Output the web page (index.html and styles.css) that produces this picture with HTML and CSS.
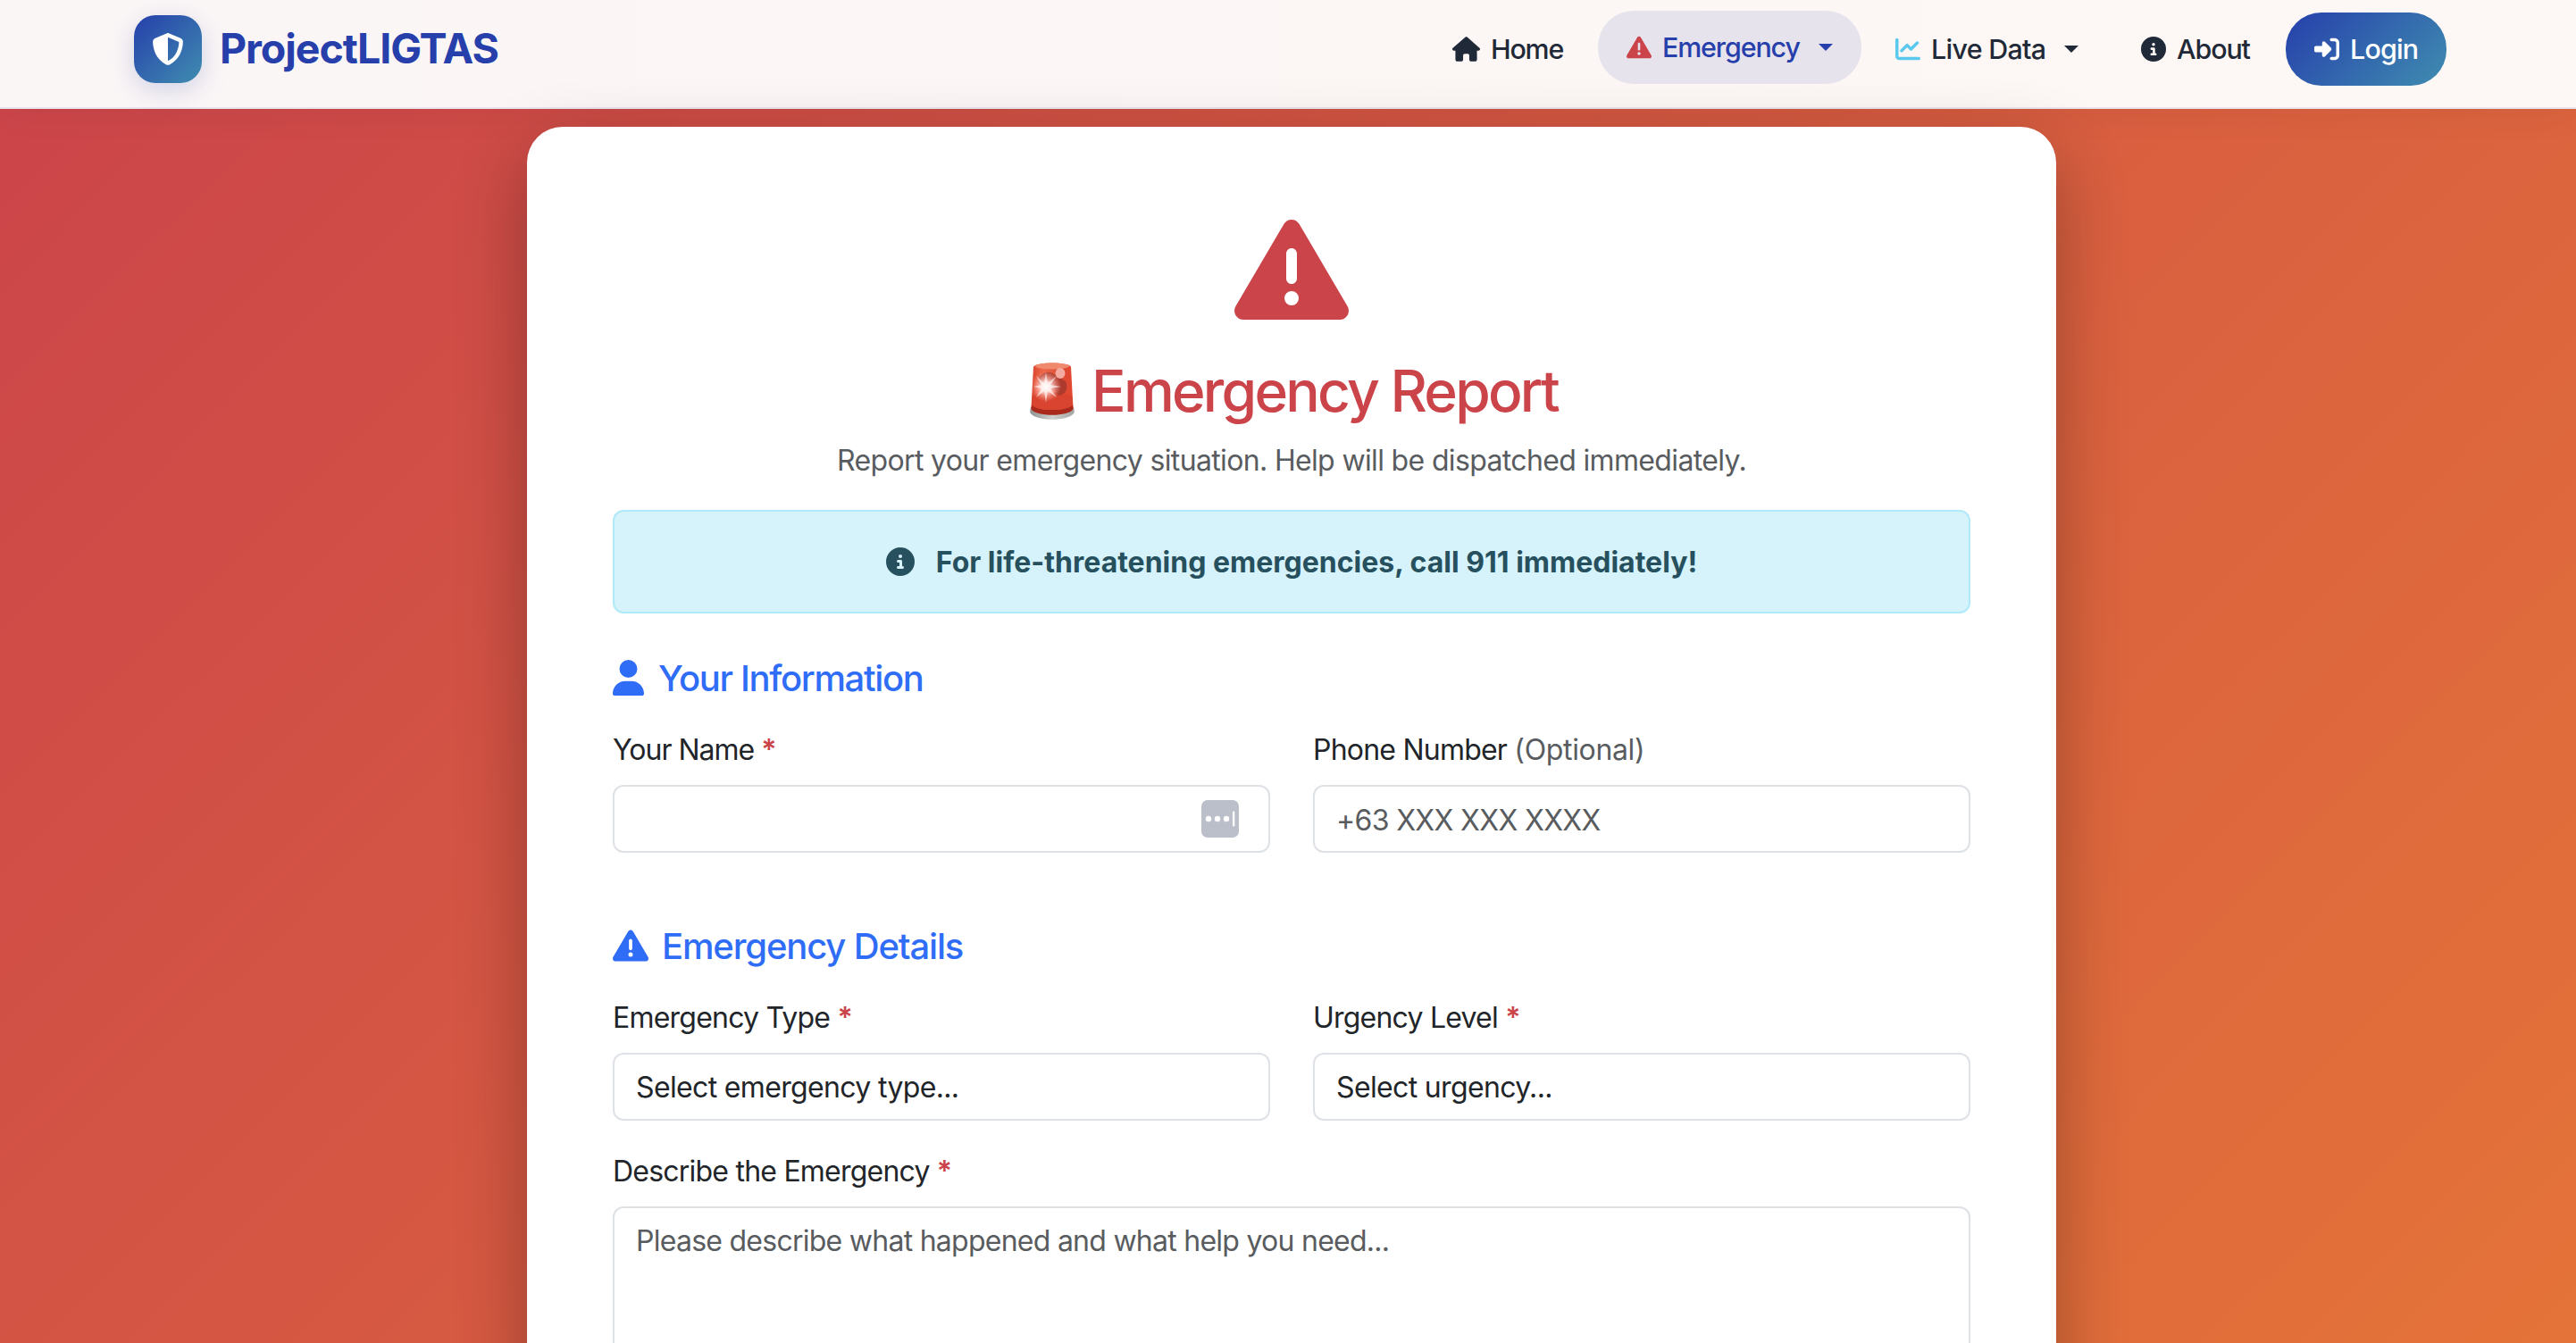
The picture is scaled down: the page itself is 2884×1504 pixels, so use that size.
FILE: index.html
```html
<!DOCTYPE html>
<html lang="en">

<head>
    <meta charset="UTF-8" />
    <meta name="viewport" content="width=device-width, initial-scale=1.0" />
    <title>Emergency Report - ProjectLIGTAS</title>
    <link rel="stylesheet" href="styles.css">
</head>

<body>
    <!-- shared icons -->
    <svg class="sprite">
        <symbol id="warning" viewBox="0 0 512 512">
            <path d="M256 32c14.2 0 27.3 7.5 34.5 19.8l216 368c7.3 12.4 7.3 27.7 .2 40.1S486.3 480 472 480H40c-14.3 0-27.6-7.7-34.7-20.1s-7-27.8 .2-40.1l216-368C228.7 39.5 241.8 32 256 32zm0 128c-13.3 0-24 10.7-24 24V296c0 13.3 10.7 24 24 24s24-10.7 24-24V184c0-13.3-10.7-24-24-24zm32 224a32 32 0 1 0 -64 0 32 32 0 1 0 64 0z" />
        </symbol>
        <symbol id="info" viewBox="0 0 512 512">
            <path d="M256 512A256 256 0 1 0 256 0a256 256 0 1 0 0 512zM216 336h24V272H216c-13.3 0-24-10.7-24-24s10.7-24 24-24h48c13.3 0 24 10.7 24 24v88h8c13.3 0 24 10.7 24 24s-10.7 24-24 24H216c-13.3 0-24-10.7-24-24s10.7-24 24-24zm40-208a32 32 0 1 1 0 64 32 32 0 1 1 0-64z" />
        </symbol>
    </svg>

    <header class="navbar">
        <a class="brand">
            <span class="brand-icon">
                <svg viewBox="0 0 512 512"><path d="M256 0c4.6 0 9.2 1 13.4 2.9L457.7 82.8c22 9.3 38.4 31 38.3 57.2c-.5 99.2-41.3 280.7-213.6 363.2c-16.7 8-36.1 8-52.8 0C57.3 420.7 16.5 239.2 16 140c-.1-26.2 16.3-47.9 38.3-57.2L242.7 2.9C246.8 1 251.4 0 256 0zm0 66.8V444.8C394 378 431.1 230.1 432 141.4L256 66.8z" /></svg>
            </span>
            <span class="brand-name">ProjectLIGTAS</span>
        </a>
        <nav class="nav">
            <a class="nav-link home">
                <svg viewBox="0 0 576 512"><path d="M575.8 255.5c0 18-15 32.1-32 32.1h-32l.7 160.2c0 2.7-.2 5.4-.5 8.1V472c0 22.1-17.9 40-40 40H456c-1.1 0-2.2 0-3.3-.1c-1.4 .1-2.8 .1-4.2 .1H416 392c-22.1 0-40-17.9-40-40V448 384c0-17.7-14.3-32-32-32H256c-17.7 0-32 14.3-32 32v64 24c0 22.1-17.9 40-40 40H160 128.1c-1.5 0-3-.1-4.5-.2c-1.2 .1-2.4 .2-3.6 .2H104c-22.1 0-40-17.9-40-40V360c0-.9 0-1.9 .1-2.8V287.6H32c-18 0-32-14-32-32.1c0-9 3-17 10-24L266.4 8c7-7 15-8 22-8s15 2 21 7L564.8 231.5c8 7 12 15 11 24z" /></svg>
                Home
            </a>
            <a class="nav-link emergency active">
                <svg><use href="#warning" /></svg>
                Emergency
                <i class="caret"></i>
            </a>
            <a class="nav-link live">
                <svg viewBox="0 0 512 512"><path d="M64 64c0-17.7-14.3-32-32-32S0 46.3 0 64V400c0 44.2 35.8 80 80 80H480c17.7 0 32-14.3 32-32s-14.3-32-32-32H80c-8.8 0-16-7.2-16-16V64zm406.6 86.6c12.5-12.5 12.5-32.8 0-45.3s-32.8-12.5-45.3 0L320 210.7l-57.4-57.4c-12.5-12.5-32.8-12.5-45.3 0l-112 112c-12.5 12.5-12.5 32.8 0 45.3s32.8 12.5 45.3 0L240 221.3l57.4 57.4c12.5 12.5 32.8 12.5 45.3 0l128-128z" /></svg>
                Live Data
                <i class="caret"></i>
            </a>
            <a class="nav-link about">
                <svg><use href="#info" /></svg>
                About
            </a>
            <a class="nav-link login">
                <svg viewBox="0 0 512 512"><path d="M217.9 105.9L340.7 228.7c7.2 7.2 11.3 17.1 11.3 27.3s-4.1 20.1-11.3 27.3L217.9 406.1c-6.4 6.4-15 9.9-24 9.9c-18.7 0-33.9-15.2-33.9-33.9l0-62.1L32 320c-17.7 0-32-14.3-32-32l0-64c0-17.7 14.3-32 32-32l128 0 0-62.1c0-18.7 15.2-33.9 33.9-33.9c9 0 17.6 3.6 24 9.9zM352 416l64 0c17.7 0 32-14.3 32-32l0-256c0-17.7-14.3-32-32-32l-64 0c-17.7 0-32-14.3-32-32s14.3-32 32-32l64 0c53 0 96 43 96 96l0 256c0 53-43 96-96 96l-64 0c-17.7 0-32-14.3-32-32s14.3-32 32-32z" /></svg>
                Login
            </a>
        </nav>
    </header>

    <main class="card">
        <svg class="hero-icon"><use href="#warning" /></svg>
        <h1>
            <svg class="siren" viewBox="0 0 64 76">
                <defs>
                    <linearGradient id="dome" x1="0" x2="1" y1="0" y2="0">
                        <stop offset="0" stop-color="#d8412c" />
                        <stop offset=".3" stop-color="#ee6a4c" />
                        <stop offset=".7" stop-color="#dc4a34" />
                        <stop offset="1" stop-color="#e2472f" />
                    </linearGradient>
                    <linearGradient id="base" x1="0" x2="1" y1="0" y2="0">
                        <stop offset="0" stop-color="#8f9390" />
                        <stop offset=".5" stop-color="#cfd1cf" />
                        <stop offset="1" stop-color="#a3a5a3" />
                    </linearGradient>
                    <radialGradient id="glow">
                        <stop offset="0" stop-color="#fff" />
                        <stop offset=".35" stop-color="#ffd9d6" stop-opacity=".9" />
                        <stop offset="1" stop-color="#ff9a8a" stop-opacity="0" />
                    </radialGradient>
                </defs>
                <path fill="url(#base)" d="M8 56C7 61 7 62 8 63c6 9 42 9 48 0 1-1 1-2 0-7z" />
                <path fill="url(#dome)" d="M11 11c1-6 41-6 42 0l2.500 46c-3 9-44 9-47 0z" />
                <path fill="#a92a1c" d="M9 53c5 8 41 8 46 0l.5 5c-4 9-43 9-47 0z" />
                <path fill="#d8442f" d="M9.500 45c7-7 38-7 45 0l.5 8c-5 8-41 8-46 0z" />
                <path fill="#8e3029" opacity=".6" d="M17 23c4-7 13-8 17-4l13 8c3 6 1 13-3 14-5 4-8 0-9-4L18 32z" />
                <ellipse cx="32" cy="10" rx="19" ry="3.500" fill="#f08a6c" />
                <ellipse cx="41" cy="18" rx="5.500" ry="6" fill="#f3aaa0" />
                <circle cx="25" cy="33" r="17" fill="url(#glow)" />
                <path fill="#fff" opacity=".6" d="M25 17l2 12 10-8-7 10 12 2-12 2 7 10-10-7-2 13-2-13-9 7 6-10-9-2 9-2-6-10 9 8z" />
            </svg>
            Emergency Report
        </h1>
        <p class="subtitle">Report your emergency situation. Help will be dispatched immediately.</p>

        <div class="alert">
            <svg><use href="#info" /></svg>
            <strong>For life-threatening emergencies, call 911 immediately!</strong>
        </div>

        <form>
            <h2 class="your-info">
                <svg class="user" viewBox="0 0 448 512"><path d="M224 256A128 128 0 1 0 224 0a128 128 0 1 0 0 256zm-45.7 48C79.8 304 0 383.8 0 482.3C0 498.7 13.3 512 29.7 512H418.3c16.4 0 29.7-13.3 29.7-29.7C448 383.8 368.2 304 269.7 304H178.3z" /></svg>
                <span>Your Information</span>
            </h2>
            <div class="row">
                <div class="field">
                    <label for="name" class="name-label">Your Name <span class="required">*</span></label>
                    <div class="input-wrap">
                        <input type="text" id="name">
                        <svg class="autofill" viewBox="0 0 42 42">
                            <rect width="42" height="42" rx="7" fill="#bbbfc9" />
                            <g fill="#fff">
                                <circle cx="8" cy="21" r="3.200" />
                                <circle cx="18" cy="21" r="3.200" />
                                <circle cx="28" cy="21" r="3.200" />
                                <rect x="35" y="12.500" width="2.300" height="17" rx="1" />
                            </g>
                        </svg>
                    </div>
                </div>
                <div class="field">
                    <label for="phone">Phone Number <span class="muted">(Optional)</span></label>
                    <input type="text" id="phone" placeholder="+63 XXX XXX XXXX">
                </div>
            </div>

            <h2>
                <svg><use href="#warning" /></svg>
                <span>Emergency Details</span>
            </h2>
            <div class="row">
                <div class="field">
                    <label for="type">Emergency Type <span class="required">*</span></label>
                    <select id="type">
                        <option value="">Select emergency type...</option>
                    </select>
                </div>
                <div class="field">
                    <label for="urgency">Urgency Level <span class="required">*</span></label>
                    <select id="urgency">
                        <option value="">Select urgency...</option>
                    </select>
                </div>
            </div>
            <div class="field description">
                <label for="details">Describe the Emergency <span class="required">*</span></label>
                <textarea id="details" placeholder="Please describe what happened and what help you need..."></textarea>
            </div>
        </form>
    </main>
</body>

</html>
```

FILE: styles.css
```css
* {
    box-sizing: border-box;
}

body {
    margin: 0;
    height: 1504px;
    overflow: hidden;
    font-family: Inter, "Liberation Sans", sans-serif;
    font-size: 32px;
    line-height: 48px;
    letter-spacing: -0.78px;
    color: #212529;
    background: linear-gradient(135deg, #cb444a, #ed8432) no-repeat;
    background-size: 100% 3116px;
}

svg {
    display: block;
    flex: none;
    fill: currentColor;
}

.sprite {
    position: absolute;
    width: 0;
    height: 0;
}

/* navbar */
.navbar {
    display: flex;
    align-items: center;
    justify-content: space-between;
    height: 122px;
    padding: 0 145px 10px 150px;
    background: linear-gradient(90deg, #fbf6f6, #fdf8f5);
    border-bottom: 2px solid #e7e4ee;
    box-shadow: 0 4px 40px rgba(0, 0, 0, 0.06);
}

.brand {
    display: flex;
    align-items: center;
    gap: 20px;
}

.brand-icon {
    display: flex;
    align-items: center;
    justify-content: center;
    width: 76px;
    height: 76px;
    border-radius: 24px;
    color: white;
    background: linear-gradient(135deg, #263fab, #3f8db0);
    box-shadow: 0 8px 30px rgba(38, 63, 171, 0.2);
}

.brand-icon svg {
    width: 36px;
    height: 36px;
}

.brand-name {
    padding-bottom: 3px;
    font-size: 46.5px;
    font-weight: 700;
    letter-spacing: -1.05px;
    color: #263fab;
}

.nav {
    display: flex;
    align-items: center;
    gap: 6px;
}

.nav-link {
    display: flex;
    align-items: center;
    gap: 12px;
    height: 82px;
    padding: 0 32px;
    border-radius: 40px;
    font-size: 30.4px;
    font-weight: 500;
    letter-spacing: -1.1px;
    white-space: nowrap;
    color: #1f2937;
}

.nav-link svg {
    width: 28px;
    height: 28px;
}

.home {
    width: 189px;
    letter-spacing: -1.2px;
}

.nav-link.home svg {
    width: 31px;
}

.emergency {
    width: 295px;
    margin-bottom: 4px;
}

.emergency svg {
    color: #cb444a;
}

.nav-link.active {
    color: #263fab;
    background: #e7e3ed;
}

.live {
    width: 269px;
    letter-spacing: -0.7px;
}

.live svg {
    color: #5bc8ee;
}

.about {
    width: 188px;
}

.login {
    width: 180px;
    letter-spacing: -0.8px;
    color: white;
    background: linear-gradient(135deg, #263fab, #3f8db0);
}

.caret {
    margin-left: auto;
    border: 8px solid transparent;
    border-top-color: currentColor;
    border-bottom: 0;
}

/* report card */
.card {
    width: 1712px;
    height: 1800px;
    margin: 20px 0 0 590px;
    padding: 96px;
    background: white;
    border-radius: 40px;
    box-shadow: 0 30px 80px rgba(0, 0, 0, 0.3);
}

.hero-icon {
    width: 128px;
    height: 128px;
    margin: 0 auto 34px;
    color: #cb444a;
}

h1 {
    display: flex;
    justify-content: center;
    gap: 12px;
    margin: 0 0 16px;
    padding-right: 2px;
    font-size: 64px;
    font-weight: 500;
    line-height: 76px;
    letter-spacing: -2.75px;
    color: #cb444a;
}

.siren {
    width: 64px;
    height: 76px;
}

.subtitle {
    margin: 0 0 31px;
    text-align: center;
    letter-spacing: -0.65px;
    color: #595c5f;
}

.alert {
    display: flex;
    align-items: center;
    justify-content: center;
    gap: 24px;
    height: 116px;
    margin-bottom: 48px;
    border: 2px solid #b0e9f8;
    border-radius: 12px;
    letter-spacing: 0;
    color: #26505d;
    background: #d6f2fb;
}

.alert svg {
    width: 32px;
    height: 32px;
}

.alert strong,
h2 span {
    padding-top: 2px;
}

h2 {
    display: flex;
    align-items: center;
    gap: 15px;
    height: 48px;
    margin: 80px 0 32px;
    font-size: 40px;
    font-weight: 500;
    line-height: 48px;
    letter-spacing: -1.15px;
    color: #306df6;
}

h2.your-info {
    gap: 16px;
    margin-top: 0;
    letter-spacing: -1.35px;
}

h2 svg {
    width: 40px;
    height: 40px;
}

h2 .user {
    width: 35px;
}

.row {
    display: grid;
    grid-template-columns: 1fr 1fr;
    gap: 48px;
}

.field label {
    display: block;
    padding-top: 1px;
    margin-bottom: 15px;
}

.field .name-label {
    letter-spacing: -1px;
}

.description {
    margin-top: 32px;
}

.required {
    font-weight: 600;
    color: #cb444a;
}

.muted {
    letter-spacing: -0.35px;
    color: #595c5f;
}

input,
select,
textarea {
    display: block;
    width: 100%;
    height: 76px;
    padding: 13px 24px 11px;
    font: inherit;
    letter-spacing: -0.65px;
    color: #212529;
    background: white;
    border: 2px solid #dee2e6;
    border-radius: 12px;
    appearance: none;
}

textarea {
    height: 300px;
    letter-spacing: -0.74px;
    resize: none;
}

::placeholder {
    color: #595c5f;
}

.input-wrap {
    position: relative;
}

.autofill {
    position: absolute;
    top: 17px;
    right: 35px;
    width: 42px;
    height: 42px;
}
```
